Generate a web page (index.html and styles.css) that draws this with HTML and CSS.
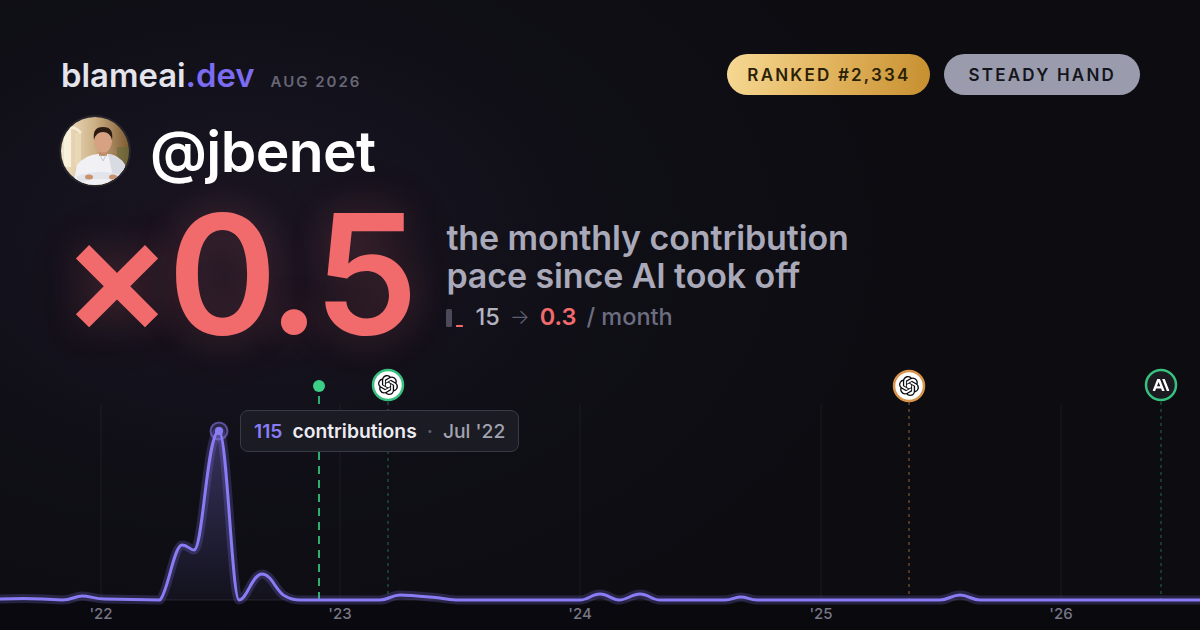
FILE: index.html
```html
<!DOCTYPE html>
<html lang="en">
<head>
<meta charset="utf-8">
<title>blameai.dev — @jbenet</title>
<link rel="stylesheet" href="styles.css">
</head>
<body>
<div class="card">
  <div class="top">
    <header class="header">
      <div class="brand">
        <span class="logo">blameai<span class="tld">.dev</span></span>
        <span class="date">AUG 2026</span>
      </div>
      <div class="badges">
        <span class="badge badge-rank">RANKED #2,334</span>
        <span class="badge badge-trait">STEADY HAND</span>
      </div>
    </header>

    <div class="identity">
      <div class="avatar">
        <svg viewBox="0 0 68 68" width="68" height="68">
          <defs>
            <linearGradient id="bg" x1="0" y1="0" x2="1" y2="0">
              <stop offset="0" stop-color="#f2e6cc"/>
              <stop offset="0.5" stop-color="#cdb084"/>
              <stop offset="1" stop-color="#7d5a32"/>
            </linearGradient>
          </defs>
          <rect width="68" height="68" fill="url(#bg)"/>
          <rect x="3" y="10" width="7" height="40" fill="#fbf3df" opacity="0.85"/>
          <rect x="14" y="16" width="6" height="34" fill="#eadbb9" opacity="0.8"/>
          <path d="M0 18 Q9 4 20 16" stroke="#fff6e2" stroke-width="3" fill="none" opacity="0.7"/>
          <rect x="56" y="30" width="12" height="22" fill="#5d6a38" opacity="0.5"/>
          <path d="M12 68 L16 48 Q24 38 37 37 L47 37 Q58 38 64 48 L66 68 Z" fill="#f1f1f5"/>
          <path d="M47 37 Q58 38 64 48 L66 68 L54 68 Z" fill="#d9dbe2"/>
          <path d="M16 59 Q40 51 63 59 L63 66 Q40 58 16 66 Z" fill="#e2e4ea"/>
          <ellipse cx="28" cy="60" rx="4" ry="2.5" fill="#c9916c"/>
          <ellipse cx="52" cy="60" rx="4" ry="2.5" fill="#c9916c"/>
          <rect x="38" y="32" width="8" height="7" fill="#c48d6a"/>
          <ellipse cx="42" cy="24" rx="9" ry="11.5" fill="#d6a283"/>
          <path d="M33 23 Q31 10 42 10 Q53 10 51 23 Q49 15 42 15 Q35 15 33 23 Z" fill="#2a1b12"/>
          <path d="M39 38 L42 44 L45 38" stroke="#c3c7d0" stroke-width="1" fill="none"/>
        </svg>
      </div>
      <span class="handle">@jbenet</span>
    </div>

    <section class="hero">
      <div class="multiplier">×0.5</div>
      <div class="summary">
        <p class="summary-title">the monthly contribution<br>pace since AI took off</p>
        <div class="rate">
          <svg class="rate-icon" viewBox="0 0 18 20" width="18" height="20">
            <rect x="0" y="1" width="6" height="18" rx="1.5" fill="#4a4a58"/>
            <rect x="10" y="17" width="7" height="2" rx="0.5" fill="#f26b6c"/>
          </svg>
          <span class="rate-from">15</span>
          <span class="rate-arrow">→</span>
          <span class="rate-to">0.3</span>
          <span class="rate-unit">/ month</span>
        </div>
      </div>
    </section>
  </div>

  <div class="chart">
    <svg class="chart-svg" viewBox="0 360 1200 270" width="1200" height="270">
      <defs>
        <linearGradient id="area" x1="0" y1="430" x2="0" y2="600" gradientUnits="userSpaceOnUse">
          <stop offset="0" stop-color="#8a7cf5" stop-opacity="0.32"/>
          <stop offset="1" stop-color="#8a7cf5" stop-opacity="0.04"/>
        </linearGradient>
        <symbol id="openai" viewBox="0 0 24 24">
          <path d="M22.2819 9.8211a5.9847 5.9847 0 0 0-.5157-4.9108 6.0462 6.0462 0 0 0-6.5098-2.9A6.0651 6.0651 0 0 0 4.9807 4.1818a5.9847 5.9847 0 0 0-3.9977 2.9 6.0462 6.0462 0 0 0 .7427 7.0966 5.98 5.98 0 0 0 .511 4.9107 6.051 6.051 0 0 0 6.5146 2.9001A5.9847 5.9847 0 0 0 13.2599 24a6.0557 6.0557 0 0 0 5.7718-4.2058 5.9894 5.9894 0 0 0 3.9977-2.9001 6.0557 6.0557 0 0 0-.7475-7.0729zm-9.022 12.6081a4.4755 4.4755 0 0 1-2.8764-1.0408l.1419-.0804 4.7783-2.7582a.7948.7948 0 0 0 .3927-.6813v-6.7369l2.02 1.1686a.071.071 0 0 1 .038.052v5.5826a4.504 4.504 0 0 1-4.4945 4.4944zm-9.6607-4.1254a4.4708 4.4708 0 0 1-.5346-3.0137l.142.0852 4.783 2.7582a.7712.7712 0 0 0 .7806 0l5.8428-3.3685v2.3324a.0804.0804 0 0 1-.0332.0615L9.74 19.9502a4.4992 4.4992 0 0 1-6.1408-1.6464zM2.3408 7.8956a4.485 4.485 0 0 1 2.3655-1.9728V11.6a.7664.7664 0 0 0 .3879.6765l5.8144 3.3543-2.0201 1.1685a.0757.0757 0 0 1-.071 0l-4.8303-2.7865A4.504 4.504 0 0 1 2.3408 7.872zm16.5963 3.8558L13.1038 8.364 15.1192 7.2a.0757.0757 0 0 1 .071 0l4.8303 2.7913a4.4944 4.4944 0 0 1-.6765 8.1042v-5.6772a.79.79 0 0 0-.407-.667zm2.0107-3.0231l-.142-.0852-4.7735-2.7818a.7759.7759 0 0 0-.7854 0L9.409 9.2297V6.8974a.0662.0662 0 0 1 .0284-.0615l4.8303-2.7866a4.4992 4.4992 0 0 1 6.6802 4.66zM8.3065 12.863l-2.02-1.1638a.0804.0804 0 0 1-.038-.0567V6.0742a4.4992 4.4992 0 0 1 7.3757-3.4537l-.142.0805L8.704 5.459a.7948.7948 0 0 0-.3927.6813zm1.0976-2.3654l2.602-1.4998 2.6069 1.4998v2.9994l-2.5974 1.4997-2.6067-1.4997Z"/>
        </symbol>
        <symbol id="anthropic" viewBox="0 0 24 24">
          <path d="M17.3041 3.541h-3.6718l6.696 16.918H24Zm-10.6082 0L0 20.459h3.7442l1.3693-3.5527h7.0052l1.3693 3.5528h3.7442L10.5363 3.5409Zm-.3712 10.2232 2.2914-5.9456 2.2914 5.9456Z"/>
        </symbol>
      </defs>

      <rect x="0" y="600" width="1200" height="30" fill="#08080c" opacity="0.55"/>

      <g class="grid">
        <line x1="101" y1="404" x2="101" y2="600"/>
        <line x1="340" y1="404" x2="340" y2="600"/>
        <line x1="580" y1="404" x2="580" y2="600"/>
        <line x1="821" y1="404" x2="821" y2="600"/>
        <line x1="1061" y1="404" x2="1061" y2="600"/>
      </g>
      <line class="baseline" x1="0" y1="600" x2="1200" y2="600"/>

      <line class="ev-green" x1="319" y1="396" x2="319" y2="600"/>
      <line class="ev-dot-green" x1="388" y1="402" x2="388" y2="600"/>
      <line class="ev-dot-orange" x1="909" y1="402" x2="909" y2="600"/>
      <line class="ev-dot-green" x1="1161" y1="402" x2="1161" y2="600"/>

      <path class="area" d="M0,599 C20,598 50,599 62,600 C72,600 75,596 82,596 C90,596 95,599 105,599 L160,600 C168,592 174,545 182,545 C188,545 190,550 194,550 C203,550 207,431 219,431 C227,431 232,600 239,600 C247,600 252,574 262,574 C272,574 276,592 285,596 C290,599 295,600 300,600 L380,600 C388,600 392,595 400,595 C412,595 428,597 440,598 C448,599 452,600 458,600 L580,600 C588,600 592,594 600,594 C608,594 612,600 619,600 C627,600 632,594 640,594 C648,594 652,600 660,600 L725,600 C732,600 735,597 741,597 C747,597 750,600 757,600 L940,600 C948,600 952,595 960,595 C968,595 972,600 980,600 L1200,600 L1200,600 L0,600 Z"/>
      <path class="line-glow" d="M0,599 C20,598 50,599 62,600 C72,600 75,596 82,596 C90,596 95,599 105,599 L160,600 C168,592 174,545 182,545 C188,545 190,550 194,550 C203,550 207,431 219,431 C227,431 232,600 239,600 C247,600 252,574 262,574 C272,574 276,592 285,596 C290,599 295,600 300,600 L380,600 C388,600 392,595 400,595 C412,595 428,597 440,598 C448,599 452,600 458,600 L580,600 C588,600 592,594 600,594 C608,594 612,600 619,600 C627,600 632,594 640,594 C648,594 652,600 660,600 L725,600 C732,600 735,597 741,597 C747,597 750,600 757,600 L940,600 C948,600 952,595 960,595 C968,595 972,600 980,600 L1200,600"/>
      <path class="line" d="M0,599 C20,598 50,599 62,600 C72,600 75,596 82,596 C90,596 95,599 105,599 L160,600 C168,592 174,545 182,545 C188,545 190,550 194,550 C203,550 207,431 219,431 C227,431 232,600 239,600 C247,600 252,574 262,574 C272,574 276,592 285,596 C290,599 295,600 300,600 L380,600 C388,600 392,595 400,595 C412,595 428,597 440,598 C448,599 452,600 458,600 L580,600 C588,600 592,594 600,594 C608,594 612,600 619,600 C627,600 632,594 640,594 C648,594 652,600 660,600 L725,600 C732,600 735,597 741,597 C747,597 750,600 757,600 L940,600 C948,600 952,595 960,595 C968,595 972,600 980,600 L1200,600"/>

      <circle class="peak-ring" cx="219" cy="431" r="8.5"/>
      <circle class="peak-dot" cx="219" cy="431" r="4"/>

      <circle cx="319" cy="386" r="6" fill="#3ccf88"/>

      <circle class="mk-light mk-green" cx="388" cy="385" r="15"/>
      <use href="#openai" x="378" y="375" width="20" height="20" fill="#0b0b0f"/>

      <circle class="mk-light mk-orange" cx="909" cy="386" r="15"/>
      <use href="#openai" x="899" y="376" width="20" height="20" fill="#0b0b0f"/>

      <circle class="mk-dark mk-green" cx="1161" cy="385" r="15"/>
      <use href="#anthropic" x="1152.5" y="376.5" width="17" height="17" fill="#ffffff"/>

      <g class="axis">
        <text x="101" y="619">'22</text>
        <text x="340" y="619">'23</text>
        <text x="580" y="619">'24</text>
        <text x="821" y="619">'25</text>
        <text x="1061" y="619">'26</text>
      </g>
    </svg>

    <div class="tooltip">
      <span class="tt-value">115</span>
      <span class="tt-label">contributions</span>
      <span class="tt-sep">·</span>
      <span class="tt-date">Jul '22</span>
    </div>
  </div>
</div>
</body>
</html>
```

FILE: styles.css
```css
* {
  box-sizing: border-box;
  margin: 0;
  padding: 0;
}

html,
body {
  width: 1200px;
  height: 630px;
  overflow: hidden;
}

body {
  background: #0c0c11;
  font-family: Inter, "Noto Sans", "Liberation Sans", sans-serif;
  color: #e8e8f0;
}

.card {
  position: relative;
  width: 1200px;
  height: 630px;
  overflow: hidden;
  background:
    radial-gradient(ellipse 720px 480px at 240px 240px, rgba(34, 28, 46, 0.65) 0%, rgba(22, 20, 32, 0.35) 50%, rgba(12, 12, 17, 0) 100%),
    #0c0c11;
}

.top {
  padding: 54px 60px 0 61px;
}

/* header */
.header {
  display: flex;
  justify-content: space-between;
  align-items: center;
  height: 41px;
}

.brand {
  display: flex;
  align-items: baseline;
  gap: 16px;
}

.logo {
  font-size: 32.8px;
  font-weight: 600;
  letter-spacing: 0;
  color: #e4e4ec;
}

.logo .tld {
  color: #7b6cf2;
}

.date {
  font-size: 15px;
  font-weight: 600;
  letter-spacing: 2px;
  color: #676777;
}

.badges {
  display: flex;
  gap: 14px;
}

.badge {
  height: 41px;
  border-radius: 21px;
  display: flex;
  align-items: center;
  font-size: 17px;
  font-weight: 600;
  letter-spacing: 2.2px;
}

.badge-rank {
  padding: 0 19px 0 20px;
  background: linear-gradient(100deg, #f6d994 0%, #e2b45e 50%, #c68f2f 100%);
  color: #2b1f06;
}

.badge-trait {
  padding: 0 24px 0 25px;
  background: #9a9cae;
  color: #15151c;
}

/* identity */
.identity {
  display: flex;
  align-items: center;
  gap: 21px;
  margin-top: 22px;
  height: 68px;
}

.avatar {
  width: 68px;
  height: 68px;
  border-radius: 50%;
  overflow: hidden;
  box-shadow: 0 0 0 2px rgba(255, 255, 255, 0.08);
}

.avatar svg {
  display: block;
}

.handle {
  font-size: 57px;
  line-height: 1;
  font-weight: 600;
  letter-spacing: -0.6px;
  color: #ffffff;
}

/* hero */
.hero {
  display: flex;
  align-items: flex-start;
  gap: 33px;
  margin-top: 6px;
  height: 166px;
}

.multiplier {
  font-size: 166px;
  line-height: 166px;
  font-weight: 600;
  letter-spacing: -5px;
  color: #f26b6c;
  text-shadow: 0 0 40px rgba(242, 107, 108, 0.22), 0 0 90px rgba(242, 107, 108, 0.08);
}

.summary {
  margin-top: 28px;
}

.summary-title {
  font-size: 34px;
  line-height: 38px;
  font-weight: 600;
  letter-spacing: -0.1px;
  color: #a9a9b9;
}

.rate {
  display: flex;
  align-items: center;
  gap: 10px;
  margin-top: 7px;
  font-size: 23.5px;
  line-height: 30px;
  font-weight: 500;
}

.rate-icon {
  display: block;
  margin-right: 1px;
  margin-top: 2px;
}

.rate-from {
  color: #b3b3c0;
}

.rate-arrow {
  color: #5f5f72;
  font-weight: 300;
  font-size: 21px;
}

.rate-to {
  color: #f26b6c;
  font-weight: 600;
}

.rate-unit {
  color: #6d6d80;
}

/* chart */
.chart {
  position: relative;
  margin-top: 3px;
  height: 270px;
}

.chart-svg {
  display: block;
}

.grid line {
  stroke: rgba(255, 255, 255, 0.055);
  stroke-width: 1;
}

.baseline {
  stroke: rgba(255, 255, 255, 0.1);
  stroke-width: 1;
}

.ev-green {
  stroke: #2fae70;
  stroke-width: 2;
  stroke-dasharray: 8 6;
}

.ev-dot-green {
  stroke: rgba(47, 174, 112, 0.6);
  stroke-width: 1;
  stroke-dasharray: 3 4;
}

.ev-dot-orange {
  stroke: rgba(216, 149, 74, 0.65);
  stroke-width: 1;
  stroke-dasharray: 3 4;
}

.area {
  fill: url(#area);
}

.line-glow {
  fill: none;
  stroke: rgba(138, 124, 245, 0.22);
  stroke-width: 9;
  stroke-linejoin: round;
  stroke-linecap: round;
}

.line {
  fill: none;
  stroke: #8a7cf5;
  stroke-width: 3;
  stroke-linejoin: round;
  stroke-linecap: round;
}

.peak-ring {
  fill: rgba(138, 124, 245, 0.2);
  stroke: rgba(138, 124, 245, 0.55);
  stroke-width: 2;
}

.peak-dot {
  fill: #8a7cf5;
}

.mk-light {
  fill: #ffffff;
  stroke-width: 2.5;
}

.mk-dark {
  fill: #1b1b21;
  stroke-width: 2.5;
}

.mk-green {
  stroke: #37c07e;
}

.mk-orange {
  stroke: #d8954a;
}

.axis text {
  font-family: Inter, "Noto Sans", sans-serif;
  font-size: 15px;
  font-weight: 500;
  fill: #777786;
  text-anchor: middle;
}

.tooltip {
  position: absolute;
  left: 240px;
  top: 50px;
  height: 42px;
  padding: 0 13px;
  display: flex;
  align-items: center;
  gap: 10px;
  background: #1b1b23;
  border: 1px solid #3a3a47;
  border-radius: 8px;
  font-size: 19.3px;
  font-weight: 600;
  white-space: nowrap;
}

.tt-value {
  color: #8a7cf5;
}

.tt-label {
  color: #ececf2;
}

.tt-sep {
  color: #5e5e6e;
}

.tt-date {
  color: #a2a2b0;
  font-weight: 500;
}
```
